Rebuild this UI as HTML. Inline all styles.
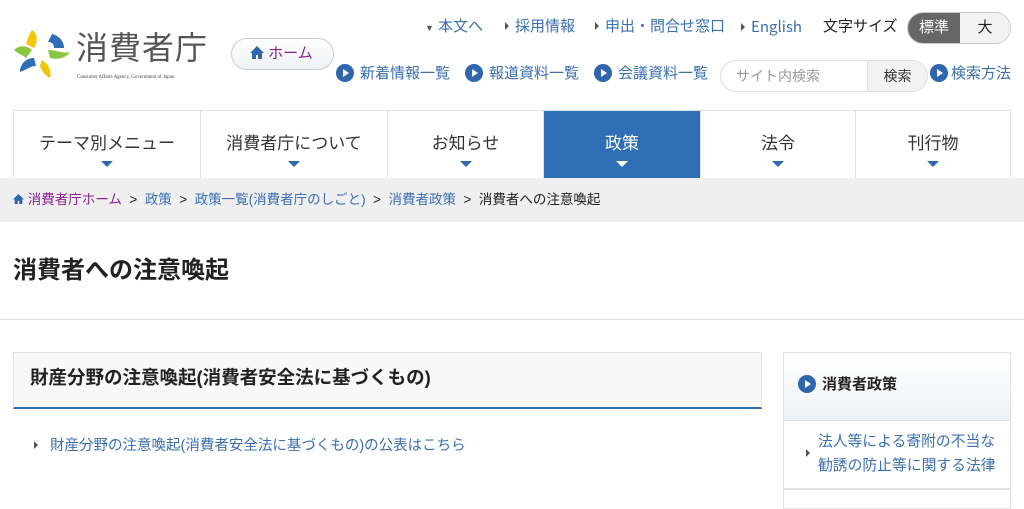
<!DOCTYPE html>
<html><head><meta charset="utf-8"><style>
*{margin:0;padding:0;box-sizing:border-box}
body{width:1024px;height:502px;overflow:hidden;background:#fff;font-family:"Liberation Sans","Noto Sans CJK JP",sans-serif;color:#222;position:relative}
.a{position:absolute;white-space:nowrap;line-height:20px}
.blue{color:#3a6fb0}
.circ{display:inline-block;width:18px;height:18px;border-radius:50%;background:#2f66ad;position:relative;vertical-align:-4px;margin-right:6px}
.circ:after{content:"";position:absolute;left:7px;top:5px;border-left:6px solid #fff;border-top:4px solid transparent;border-bottom:4px solid transparent}
.tri{display:inline-block;border-left:4px solid #555;border-top:4px solid transparent;border-bottom:4px solid transparent;margin-right:6px;vertical-align:1px}
.nav{position:absolute;top:110px;left:13px;width:998px;height:68px;display:flex;border-top:1px solid #ddd}
.nav div{border-left:1px solid #e3e3e3;text-align:center;font-size:17px;color:#333;padding-top:18px;position:relative}
.nav div:after{content:"";position:absolute;left:50%;margin-left:-6px;top:50px;border-top:6px solid #2f66ad;border-left:6px solid transparent;border-right:6px solid transparent}
.nav div.on{background:#2f6db5;color:#fff}
.nav div.on:after{border-top-color:#fff}
</style></head><body>
<svg class="a" style="left:12px;top:28px" width="60" height="52" viewBox="0 0 60 52">
<path d="M20 2c6 4 6 12 2 18l-8-4c2-4 2-8 6-14z" fill="#f5c400"/>
<path d="M40 6c8 2 12 8 12 14l-10 0c0-4-2-6-6-6z" fill="#2f6db5"/>
<path d="M2 22c6-6 14-4 18 0l-6 8c-3-3-8-4-12-8z" fill="#8cc63f"/>
<path d="M36 22c8 0 16 4 22 2c-4 6-12 8-20 6z" fill="#8cc63f"/>
<path d="M8 44c0-8 6-14 14-14l2 8c-6 0-10 4-16 6z" fill="#2f6db5"/>
<path d="M30 32c6 4 10 10 8 18c-4-2-8-6-10-12z" fill="#f5c400"/>
</svg>
<div class="a" style="left:76px;top:30px;font-size:32px;color:#555;letter-spacing:1px;line-height:36px">消費者庁</div>
<div class="a" style="left:77px;top:68px;font-size:5px;color:#444;font-family:'Liberation Serif',serif">Consumer Affairs Agency, Government of Japan</div>
<div class="a" style="left:231px;top:38px;width:103px;height:32px;border:1px solid #ccc;border-radius:16px;background:linear-gradient(#fff,#eef1f4);font-size:15px;color:#8a1f8f;line-height:30px;padding-left:18px"><svg width="14" height="13" viewBox="0 0 14 13" style="vertical-align:-1px"><path d="M7 0L0 7h2v6h4V9h2v4h4V7h2z" fill="#2f66ad"/></svg> ホーム</div>
<div class="a" style="top:17px;left:425px;font-size:15px"><span style="font-size:9px;color:#555">▼</span> <span class="blue">本文へ</span></div>
<div class="a" style="top:17px;left:505px;font-size:15px"><span class="tri"></span><span class="blue">採用情報</span></div>
<div class="a" style="top:17px;left:595px;font-size:15px"><span class="tri"></span><span class="blue">申出・問合せ窓口</span></div>
<div class="a" style="top:17px;left:741px;font-size:15px"><span class="tri"></span><span class="blue" style="font-family:'Noto Sans CJK JP',sans-serif">English</span></div>
<div class="a" style="top:17px;left:823px;font-size:15px">文字サイズ</div>
<div class="a" style="top:12px;left:907px;width:104px;height:32px;border:1px solid #ccc;border-radius:16px;overflow:hidden;display:flex;font-size:15px;line-height:30px">
<div style="width:52px;background:#666;color:#fff;text-align:center">標準</div><div style="flex:1;background:#f2f2f2;text-align:center">大</div></div>
<div class="a" style="top:64px;left:336px;font-size:15px"><span class="circ"></span><span class="blue">新着情報一覧</span></div>
<div class="a" style="top:64px;left:465px;font-size:15px"><span class="circ"></span><span class="blue">報道資料一覧</span></div>
<div class="a" style="top:64px;left:594px;font-size:15px"><span class="circ"></span><span class="blue">会議資料一覧</span></div>
<div class="a" style="top:60px;left:720px;width:208px;height:32px;border:1px solid #ddd;border-radius:16px;overflow:hidden;display:flex;font-size:14px;line-height:30px">
<div style="flex:1;color:#999;padding-left:15px">サイト内検索</div><div style="width:60px;background:#f2f2f2;border-left:1px solid #ddd;text-align:center;color:#333">検索</div></div>
<div class="a" style="top:64px;left:930px;font-size:15px"><span class="circ" style="margin-right:3px"></span><span class="blue">検索方法</span></div>
<div class="nav">
<div style="width:187px">テーマ別メニュー</div><div style="width:187px">消費者庁について</div><div style="width:156px">お知らせ</div><div class="on" style="width:157px">政策</div><div style="width:155px">法令</div><div style="width:156px;border-right:1px solid #e3e3e3">刊行物</div>
</div>
<div class="a" style="top:178px;left:0;width:1024px;height:44px;background:#efefef"></div>
<div class="a" style="top:190px;left:13px;font-size:13.5px"><svg width="11" height="10" viewBox="0 0 14 13"><path d="M7 0L0 7h2v6h4V9h2v4h4V7h2z" fill="#2f66ad"/></svg> <span style="color:#8a1f8f">消費者庁ホーム</span> &nbsp;&gt;&nbsp; <span class="blue">政策</span> &nbsp;&gt;&nbsp; <span class="blue">政策一覧(消費者庁のしごと)</span> &nbsp;&gt;&nbsp; <span class="blue">消費者政策</span> &nbsp;&gt;&nbsp; 消費者への注意喚起</div>
<div class="a" style="top:257px;left:13px;font-size:24px;line-height:28px;font-weight:bold">消費者への注意喚起</div>
<div class="a" style="top:319px;left:0;width:1024px;height:1px;background:#ddd"></div>
<div class="a" style="top:352px;left:13px;width:749px;height:57px;background:#f8f8f8;border:1px solid #e3e3e3;border-bottom:2px solid #2f6db5;font-size:18.5px;font-weight:bold;padding:15px 0 0 16px">財産分野の注意喚起(消費者安全法に基づくもの)</div>
<div class="a" style="top:436px;left:34px;font-size:14.5px"><span class="tri" style="margin-right:12px"></span><span class="blue">財産分野の注意喚起(消費者安全法に基づくもの)の公表はこちら</span></div>
<div class="a" style="top:352px;left:783px;width:228px;height:69px;background:linear-gradient(#fff,#eef1f4);border:1px solid #e3e3e3;font-size:15px;font-weight:bold;padding:22px 0 0 14px"><span class="circ"></span>消費者政策</div>
<div class="a" style="top:421px;left:783px;width:228px;height:68px;border:1px solid #e3e3e3;border-top:none;font-size:14.8px;line-height:24px;padding:9px 0 0 34px" ><span class="a" style="left:22px;top:28px;border-left:4px solid #555;border-top:4px solid transparent;border-bottom:4px solid transparent"></span><span class="blue">法人等による寄附の不当な<br>勧誘の防止等に関する法律</span></div>
<div class="a" style="top:489px;left:783px;width:228px;height:20px;border:1px solid #e3e3e3"></div>
</body></html>
